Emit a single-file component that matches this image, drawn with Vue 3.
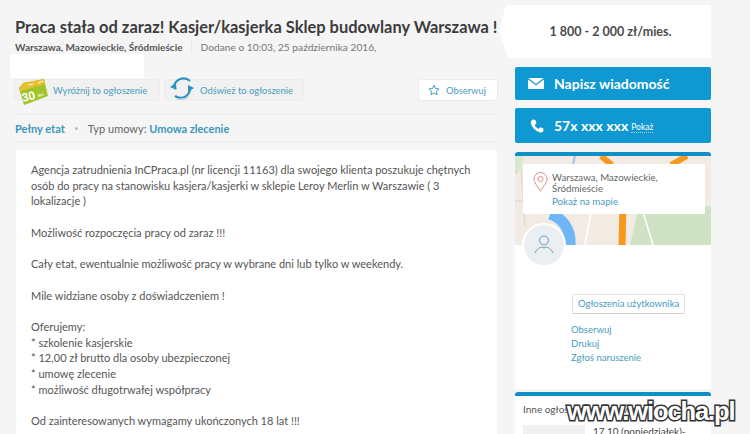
<template>
  <div class="page">
    <!-- lewa kolumna -->
    <main class="main">
      <h1 class="title">Praca stała od zaraz! Kasjer/kasjerka Sklep budowlany Warszawa !</h1>
      <div class="meta">
        <strong>Warszawa, Mazowieckie, Śródmieście</strong>
        <span class="meta-sep"></span>
        <span>Dodane o 10:03, 25 października 2016,</span>
      </div>
      <div class="redacted"></div>

      <div class="actions">
        <a class="action promote">
          <svg class="tag" width="31" height="27" viewBox="0 0 31 27">
            <path d="M1 9 L5 4 L26 0 L30 17 L6 26 Z" fill="#9fc52b" />
            <path d="M1 9 L5 4 L26 0 L27 5 L2 12 Z" fill="#e6c12e" />
            <path d="M10 6 L15 5 M20 4 L25 2" stroke="#fff" stroke-width="1" />
            <text x="5" y="23" class="tag-num" transform="rotate(-14 5 23)">30</text>
            <text x="20" y="18" class="tag-unit" transform="rotate(-14 20 18)">dni</text>
          </svg>
          Wyróżnij to ogłoszenie
        </a>
        <a class="action refresh">
          <svg class="spin" width="24" height="26" viewBox="0 0 24 26" fill="none">
            <path d="M4 12 A9.5 9.5 0 0 1 20 6" stroke="#2c93bd" stroke-width="2.2" />
            <path d="M20 14 A9.5 9.5 0 0 1 5 21" stroke="#2c93bd" stroke-width="2.2" />
            <path d="M0 12 L6 8 L6.500 15 Z" fill="#2c93bd" />
            <path d="M24 13 L18 17 L18 10 Z" fill="#2c93bd" />
            <path d="M7 24 A11 5 0 0 0 19 22" stroke="#c9d6dc" stroke-width="1.5" />
          </svg>
          Odśwież to ogłoszenie
        </a>
        <a class="action watch">
          <svg width="12" height="12" viewBox="0 0 24 24" fill="none" stroke="#4a9cc0" stroke-width="2">
            <path d="M12 2.5 L15 9 L22 9.800 L16.800 14.500 L18.300 21.500 L12 18 L5.700 21.500 L7.200 14.500 L2 9.800 L9 9 Z" />
          </svg>
          Obserwuj
        </a>
      </div>

      <div class="terms">
        <a class="term-link">Pełny etat</a>
        <span class="dot"></span>
        <span>Typ umowy: <a class="term-link">Umowa zlecenie</a></span>
      </div>

      <article class="desc">
        <p>Agencja zatrudnienia InCPraca.pl (nr licencji 11163) dla swojego klienta poszukuje chętnych osób do pracy na stanowisku kasjera/kasjerki w sklepie Leroy Merlin w Warszawie ( 3 lokalizacje )</p>
        <p>Możliwość rozpoczęcia pracy od zaraz !!!</p>
        <p>Cały etat, ewentualnie możliwość pracy w wybrane dni lub tylko w weekendy.</p>
        <p>Mile widziane osoby z doświadczeniem !</p>
        <p>
          Oferujemy:<br />
          * szkolenie kasjerskie<br />
          * 12,00 zł brutto dla osoby ubezpieczonej<br />
          * umowę zlecenie<br />
          * możliwość długotrwałej współpracy
        </p>
        <p>Od zainteresowanych wymagamy ukończonych 18 lat !!!</p>
      </article>
    </main>

    <!-- prawa kolumna -->
    <aside class="side">
      <div class="price">1 800 - 2 000 zł/mies.</div>

      <a class="cta mail">
        <svg width="16" height="11" viewBox="0 0 16 11">
          <path d="M0.500 0 H15.500 L8 6 Z" fill="#fff" />
          <path d="M0 1.200 L8 7.500 L16 1.200 V11 H0 Z" fill="#fff" />
        </svg>
        <span>Napisz wiadomość</span>
      </a>
      <a class="cta phone">
        <svg width="14" height="14" viewBox="0 0 24 24">
          <path d="M5 1 L9.500 1.500 L11 8 L8 10 C9.500 13.500 11 15.500 15 17 L17 14 L23 16 L23 20.500 C22 23 19 23.500 16 22.500 C9 20 3.500 14 1.500 8 C0.800 5 2 2 5 1 Z" fill="#fff" />
        </svg>
        <span>57x xxx xxx</span>
        <small>Pokaż</small>
      </a>

      <section class="card user">
        <div class="map">
          <svg class="map-bg" width="196" height="89" viewBox="0 0 196 89">
            <rect width="196" height="89" fill="#f1ebe3" />
            <path d="M0 0 H9 L3 18 H0 Z" fill="#d5e8c8" />
            <path d="M115 89 L123 54 L196 50 V89 Z" fill="#cfe3c4" />
            <path d="M86 0 L97 9" stroke="#f7981d" stroke-width="6" fill="none" />
            <path d="M156 9 L172 0" stroke="#f7981d" stroke-width="6" fill="none" />
            <path d="M108 50 L107 89" stroke="#f7981d" stroke-width="7" fill="none" />
            <path d="M60 0 L58 8" stroke="#9cc6ea" stroke-width="2" fill="none" />
            <path d="M35 58 C48 62 56 74 55 89" stroke="#6db7f6" stroke-width="11" fill="none" />
            <path d="M70 89 L76 56 M128 56 L138 89" stroke="#fff" stroke-width="1.500" fill="none" />
            <path d="M0 45 H10 M6 10 L10 70" stroke="#e3dcd1" stroke-width="1.500" fill="none" />
          </svg>
          <div class="map-label">
            <svg class="pin" width="15" height="20" viewBox="0 0 15 20" fill="none" stroke="#e08f8f" stroke-width="1">
              <path d="M7.500 19.200 C4 13.500 1 10.500 1 7 A6.500 6.500 0 0 1 14 7 C14 10.500 11 13.500 7.500 19.200 Z" />
              <circle cx="7.500" cy="7" r="2.600" />
            </svg>
            <div>
              <div class="loc">Warszawa, Mazowieckie,<br />Śródmieście</div>
              <a class="map-link">Pokaż na mapie</a>
            </div>
          </div>
          <div class="avatar">
            <svg width="22" height="22" viewBox="0 0 22 22" fill="none" stroke="#5f9dbf" stroke-width="1">
              <circle cx="11" cy="6.500" r="4.500" />
              <path d="M2 19 C4 14.500 7 13.500 9 13 M20 19 C18 14.500 15 13.500 13 13 M9 13 C10 14 12 14 13 13" />
            </svg>
          </div>
        </div>
        <div class="user-body">
          <a class="user-btn">Ogłoszenia użytkownika</a>
          <a>Obserwuj</a>
          <a>Drukuj</a>
          <a>Zgłoś naruszenie</a>
        </div>
      </section>

      <section class="card other">
        <div class="other-head">Inne ogłoszenia użytkownika</div>
        <div class="other-row">
          <div class="thumb"></div>
          <div class="other-text">17.10 (poniedziałek)-</div>
        </div>
      </section>
    </aside>

    <div class="watermark">www.wiocha.pl</div>
  </div>
</template>

<script setup>
</script>

<style>
html,
body {
  margin: 0;
  background: #f5f5f5;
}
</style>

<style scoped>
.page {
  position: relative;
  display: flex;
  align-items: flex-start;
  width: 750px;
  height: 434px;
  overflow: hidden;
  padding-left: 15px;
  box-sizing: border-box;
  background: #f5f5f5;
  font-family: Lato, "Liberation Sans", sans-serif;
  color: #555;
}

a {
  color: #4a9cc0;
  text-decoration: none;
}

/* lewa kolumna */
.main {
  width: 482px;
  flex: none;
  padding-top: 17px;
}

.title {
  margin: 0;
  font-size: 16.45px;
  line-height: 21px;
  font-weight: 700;
  color: #3c3c3c;
  white-space: nowrap;
}

.meta {
  display: flex;
  align-items: center;
  margin-top: 2px;
  height: 14px;
  font-size: 10.2px;
  color: #777;
  white-space: nowrap;
}

.meta strong {
  font-size: 10px;
  color: #555;
}

.meta-sep {
  width: 1px;
  height: 14px;
  margin: 0 9px 0 8px;
  background: #e8e8e8;
}

.redacted {
  width: 134px;
  height: 24px;
  margin: 0 0 0 -5px;
  background: #fff;
}

.actions {
  display: flex;
  gap: 4px;
  margin-top: 1px;
  margin-left: -1px;
}

.action {
  display: flex;
  align-items: center;
  height: 22px;
  box-sizing: border-box;
  border: 1px solid #ececec;
  border-radius: 3px;
  background: #f1f1f1;
  font-size: 9.4px;
}

.promote {
  width: 146px;
  padding-left: 3px;
  gap: 4px;
}

.tag {
  margin: 4px 0 0 0;
  flex: none;
}

.tag-num {
  font: 700 12px "Liberation Sans", sans-serif;
  fill: #fff;
}

.tag-unit {
  font: 700 4px "Liberation Sans", sans-serif;
  fill: #fff;
}

.refresh {
  width: 140px;
  padding-left: 5px;
  gap: 6px;
}

.spin {
  flex: none;
  margin-top: -5px;
}

.watch {
  width: 80px;
  margin-left: auto;
  margin-right: -1px;
  padding-left: 9px;
  gap: 6px;
  background: #fff;
}

.terms {
  display: flex;
  align-items: center;
  margin-top: 13px;
  padding: 6px 0;
  height: 14px;
  border-top: 1px solid #ececec;
  border-bottom: 1px solid #ececec;
  font-size: 11px;
  color: #666;
}

.term-link {
  font-weight: 700;
  color: #3d95bd;
}

.dot {
  width: 3px;
  height: 3px;
  margin: 0 10px;
  border-radius: 50%;
  background: #bbb;
}

.desc {
  margin: 8px 0 0 1px;
  padding: 12px 8px 40px 15px;
  background: #fff;
  border-radius: 3px;
  font-size: 11px;
  line-height: 15.7px;
  color: #555;
}

.desc p {
  margin: 0 0 15.7px;
}

/* prawa kolumna */
.side {
  width: 196px;
  flex: none;
  margin-left: 18px;
  padding-top: 5px;
}

.price {
  width: 212px;
  height: 53px;
  margin-left: -16px;
  padding-left: 11px;
  box-sizing: border-box;
  display: flex;
  align-items: center;
  justify-content: center;
  background: #fff;
  clip-path: polygon(7px 0, 100% 0, 100% 100%, 9px 100%, 0 50%);
  font-size: 12.5px;
  font-weight: 700;
  color: #4a4a4a;
}

.cta {
  display: flex;
  align-items: center;
  margin-top: 9px;
  height: 33px;
  padding-left: 13px;
  border-radius: 2px;
  background: #0f98d1;
  color: #fff;
  font-size: 14px;
  font-weight: 700;
}

.cta span {
  margin-left: 10px;
}

.phone {
  height: 35px;
  margin-top: 8px;
  padding-left: 15px;
}

.cta.phone span {
  margin-left: 10px;
}

.cta small {
  margin-left: 3px;
  padding-top: 3px;
  font-size: 8.5px;
  font-weight: 400;
  border-bottom: 1px dotted #9fd6ee;
  line-height: 10px;
}

.card {
  background: #fff;
  border-top: 4px solid #0f8fc6;
  border-radius: 3px 3px 0 0;
}

.user {
  margin-top: 9px;
}

.map {
  position: relative;
  height: 89px;
}

.map-bg {
  display: block;
}

.map-label {
  position: absolute;
  left: 8px;
  top: 8px;
  width: 182px;
  height: 50px;
  box-sizing: border-box;
  display: flex;
  gap: 4px;
  padding: 8px 0 0 10px;
  background: #fff;
  border-radius: 2px;
  font-size: 9.7px;
  line-height: 11.3px;
  color: #666;
}

.pin {
  flex: none;
}

.map-link {
  display: block;
  margin-top: 1px;
}

.avatar {
  position: absolute;
  left: 7px;
  top: 67px;
  width: 40px;
  height: 40px;
  display: flex;
  align-items: center;
  justify-content: center;
  background: #eceff1;
  border: 2px solid #fff;
  border-radius: 50%;
}

.user-body {
  display: flex;
  flex-direction: column;
  align-items: flex-start;
  height: 144px;
  box-sizing: border-box;
  padding: 49px 0 0 56px;
  font-size: 9.5px;
  line-height: 14px;
}

.user-body a {
  color: #4a9cc0;
}

.user-body .user-btn {
  margin-bottom: 9px;
  padding: 2px 5px;
  border: 1px solid #e2e2e2;
  border-bottom-color: #ccc;
  border-radius: 2px;
  margin-left: 1px;
}

.other {
  margin-top: 3px;
  padding: 6px 8px 0;
  height: 60px;
  font-size: 10px;
  color: #555;
}

.other-head {
  line-height: 14px;
}

.other-row {
  display: flex;
  gap: 8px;
  margin-top: 9px;
}

.thumb {
  width: 62px;
  height: 40px;
  flex: none;
  background: #f1f1f1;
}

.other-text {
  color: #444;
  line-height: 13px;
}

/* znak wodny */
.watermark {
  position: absolute;
  left: 567px;
  top: 393px;
  font-family: "Liberation Sans", sans-serif;
  font-size: 25.5px;
  font-weight: 700;
  line-height: 36px;
  letter-spacing: -1.1px;
  color: #fff;
  -webkit-text-stroke: 3px #333;
  paint-order: stroke fill;
}
</style>
